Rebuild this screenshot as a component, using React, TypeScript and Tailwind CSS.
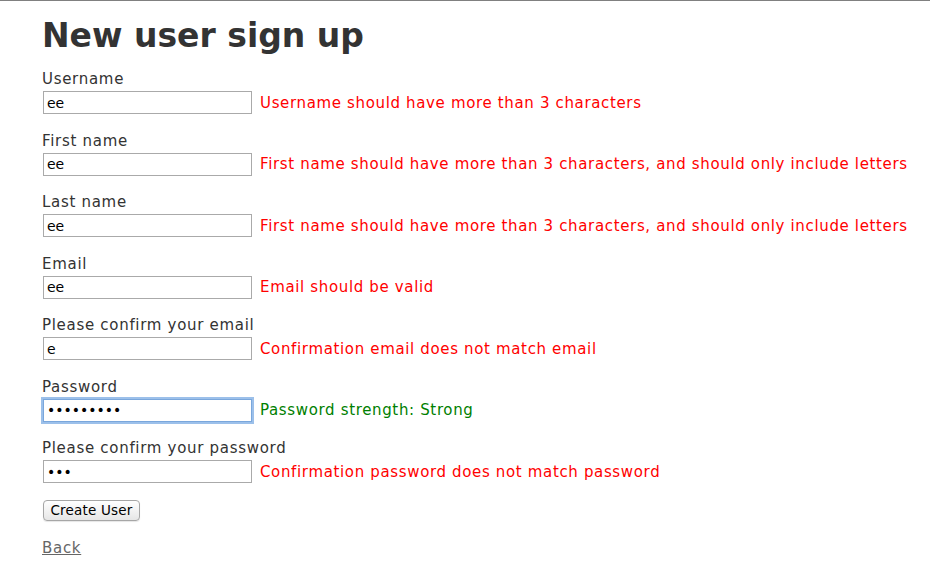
import React from 'react';

type Field = {
  label: string;
  value: string;
  type?: string;
  message: string;
  ok?: boolean;
  focused?: boolean;
};

const fields: Field[] = [
  { label: 'Username', value: 'ee', message: 'Username should have more than 3 characters' },
  {
    label: 'First name',
    value: 'ee',
    message: 'First name should have more than 3 characters, and should only include letters',
  },
  {
    label: 'Last name',
    value: 'ee',
    message: 'First name should have more than 3 characters, and should only include letters',
  },
  { label: 'Email', value: 'ee', message: 'Email should be valid' },
  { label: 'Please confirm your email', value: 'e', message: 'Confirmation email does not match email' },
  {
    label: 'Password',
    value: 'abcdefghi',
    type: 'password',
    message: 'Password strength: Strong',
    ok: true,
    focused: true,
  },
  {
    label: 'Please confirm your password',
    value: 'abc',
    type: 'password',
    message: 'Confirmation password does not match password',
  },
];

const App = () => {
  return (
    <div
      className="min-h-[562px] w-[930px] border-t border-[#808080] bg-white text-[#333] font-['DejaVu_Sans',Verdana,sans-serif]"
    >
      <div className="pl-[42px] pt-[13px]">
        <h1 className="text-[33px] font-bold leading-[44px] text-[#333] mb-[11px]">
          New user sign up
        </h1>

        <form onSubmit={(e) => e.preventDefault()}>
          {fields.map((f) => (
            <div key={f.label} className="mb-[16.5px]">
              <label className="block text-[15px] leading-5 tracking-[0.7px] mb-[2px]">{f.label}</label>
              <div className="flex items-center">
                <input
                  type={f.type ?? 'text'}
                  defaultValue={f.value}
                  readOnly
                  className={
                    f.focused
                      ? 'ml-px h-[23px] w-[209px] border border-[#7aa7dc] px-[3px] text-[14px] text-black outline-none shadow-[0_0_0_2px_#9cc0ea] font-["DejaVu_Sans",sans-serif]'
                      : 'ml-px h-[23px] w-[209px] border border-[#aaa] px-[3px] text-[14px] text-black outline-none font-["DejaVu_Sans",sans-serif]'
                  }
                />
                <span
                  className={
                    f.ok
                      ? 'ml-[8px] text-[15px] leading-5 tracking-[0.65px] text-[#008000]'
                      : 'ml-[8px] text-[15px] leading-5 tracking-[0.65px] text-[#f00]'
                  }
                >
                  {f.message}
                </span>
              </div>
            </div>
          ))}

          <button
            type="submit"
            className="ml-px block h-[21px] w-[97px] rounded-[4px] border border-[#a6a6a6] bg-gradient-to-b from-white to-[#e6e6e6] text-[13.5px] leading-[19px] tracking-[0.2px] text-black shadow-[0_1px_1px_rgba(0,0,0,0.1)] font-['DejaVu_Sans',sans-serif]"
          >
            Create User
          </button>
        </form>

        <a href="#" className="mt-[17px] block w-fit text-[15px] leading-5 tracking-[0.7px] text-[#666] underline">
          Back
        </a>
      </div>
    </div>
  );
};

export default App;
